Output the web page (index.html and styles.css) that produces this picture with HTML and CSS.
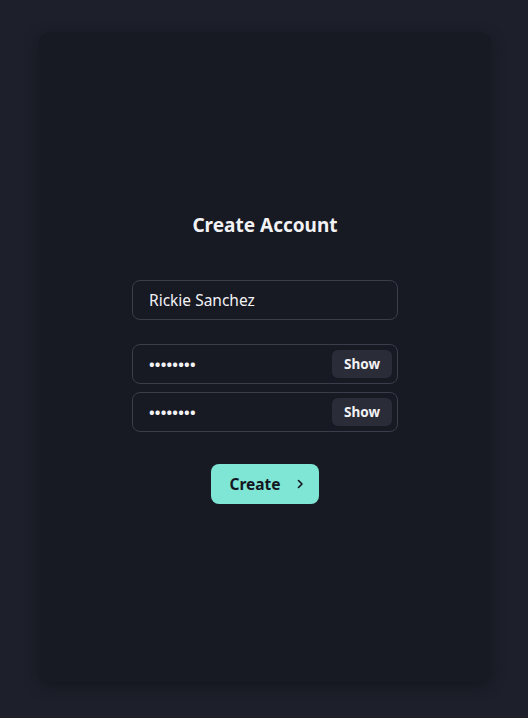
FILE: index.html
```html
<!DOCTYPE html>
<html lang="en">
<head>
  <meta charset="UTF-8">
  <title>Create Account</title>
  <link rel="stylesheet" href="styles.css">
</head>
<body>
  <!-- signup card -->
  <div class="card">
    <form class="signup">
      <h1 class="title">Create Account</h1>

      <div class="field">
        <input type="text" value="Rickie Sanchez">
      </div>

      <div class="pw-group">
        <div class="field">
          <input type="password" value="password">
          <button type="button" class="show-btn">Show</button>
        </div>
        <div class="field">
          <input type="password" value="password">
          <button type="button" class="show-btn">Show</button>
        </div>
      </div>

      <button type="button" class="create-btn">
        Create
        <svg width="10" height="10" viewBox="0 0 10 10"><path d="M3.5 1.5 L7 5 L3.5 8.5" fill="none" stroke="currentColor" stroke-width="1.6" stroke-linecap="round" stroke-linejoin="round"/></svg>
      </button>
    </form>
  </div>
</body>
</html>
```

FILE: styles.css
```css
* { box-sizing: border-box; margin: 0; padding: 0; }
body {
  background: #1d202a;
  font-family: "Noto Sans", "Open Sans", sans-serif;
  color: #f2f2f5;
  padding: 32px 37px 36px 39px;
}

.card {
  height: 650px;
  background: #171923;
  border-radius: 12px;
  box-shadow: 0 4px 14px rgba(10, 12, 18, 0.5);
  display: flex;
  align-items: center;
  justify-content: center;
}

.signup {
  width: 266px;
  display: flex;
  flex-direction: column;
  align-items: center;
  padding-top: 1px;
}

.title {
  font-size: 19px;
  font-weight: 700;
  line-height: 26px;
  margin-bottom: 42px;
}

.field {
  width: 100%;
  height: 40px;
  border: 1px solid #3a3d4a;
  border-radius: 8px;
  display: flex;
  align-items: center;
  padding: 0 5px 0 16px;
}
.field input {
  flex: 1;
  min-width: 0;
  background: none;
  border: none;
  outline: none;
  color: #f2f2f5;
  font-family: inherit;
  font-size: 15.5px;
}
.field input[type=password] {
  font-size: 15px;
  font-weight: 700;
  letter-spacing: 0.2px;
}

.pw-group {
  width: 100%;
  margin-top: 24px;
  display: flex;
  flex-direction: column;
  gap: 8px;
}

.show-btn {
  background: #2a2d37;
  color: #f2f2f5;
  border: none;
  border-radius: 6px;
  height: 28px;
  width: 60px;
  font-family: inherit;
  font-size: 13.5px;
  font-weight: 700;
}

.create-btn {
  margin-top: 32px;
  height: 40px;
  width: 108px;
  background: #7fe6d6;
  color: #14161f;
  border: none;
  border-radius: 8px;
  font-family: inherit;
  font-size: 15.5px;
  font-weight: 700;
  display: flex;
  align-items: center;
  justify-content: center;
  gap: 14px;
  padding-left: 4px;
}
```
